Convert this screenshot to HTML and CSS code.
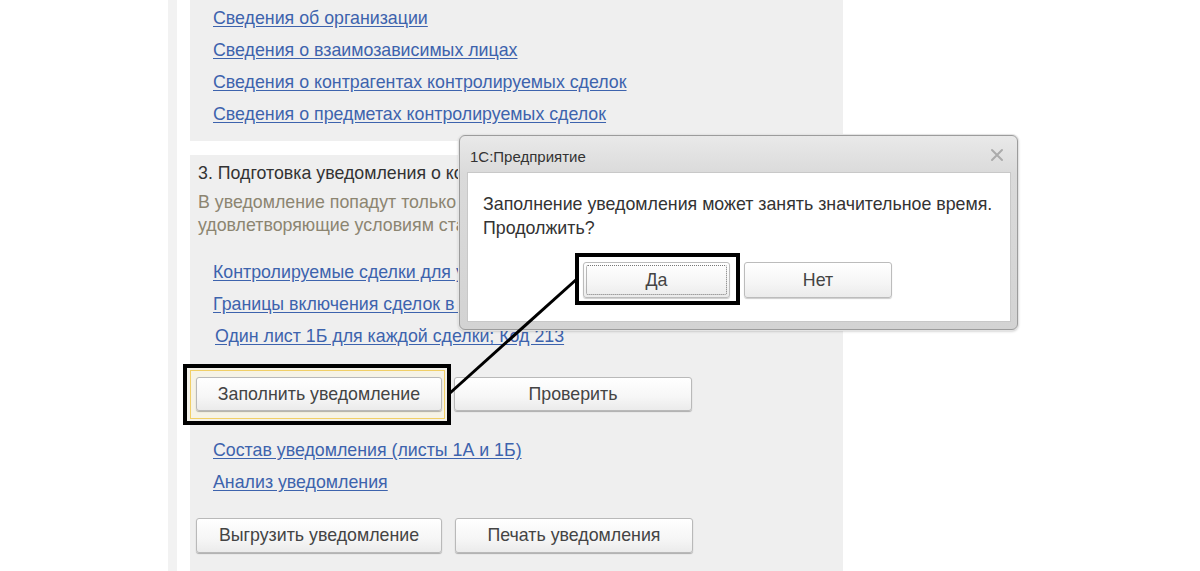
FILE: index.html
```html
<!DOCTYPE html>
<html lang="ru">
<head>
<meta charset="utf-8">
<title>Уведомление о контролируемых сделках</title>
<link rel="stylesheet" href="styles.css">
</head>
<body>
<div class="page">
  <div class="rail"></div>
  <div class="column">
    <section class="panel panel-top">
      <a class="link" href="#">Сведения об организации</a>
      <a class="link" href="#">Сведения о взаимозависимых лицах</a>
      <a class="link" href="#">Сведения о контрагентах контролируемых сделок</a>
      <a class="link" href="#">Сведения о предметах контролируемых сделок</a>
    </section>
    <section class="panel panel-main">
      <div class="heading">3. Подготовка уведомления о контролируемых сделках</div>
      <div class="note">В уведомление попадут только контролируемые сделки,<br>удовлетворяющие условиям статьи 105.14 НК РФ</div>
      <div class="links">
        <a class="link" href="#">Контролируемые сделки для уведомления</a>
        <a class="link" href="#">Границы включения сделок в уведомление</a>
        <a class="link link-shift" href="#">Один лист 1Б для каждой сделки; Код 213</a>
      </div>
      <div class="btn-row">
        <div class="mark mark-fill">
          <div class="mark-glow">
            <button class="btn btn-wide">Заполнить уведомление</button>
          </div>
        </div>
        <button class="btn">Проверить</button>
      </div>
      <div class="links links-after">
        <a class="link" href="#">Состав уведомления (листы 1А и 1Б)</a>
        <a class="link" href="#">Анализ уведомления</a>
      </div>
      <div class="btn-row btn-row-last">
        <button class="btn btn-wide">Выгрузить уведомление</button>
        <button class="btn">Печать уведомления</button>
      </div>
    </section>
  </div>
</div>

<div class="dialog">
  <div class="dialog-title">
    <span class="dialog-caption">1С:Предприятие</span>
    <svg class="dialog-close" width="14" height="14" viewBox="0 0 14 14">
      <path d="M2 2 L12 12 M12 2 L2 12" stroke="#ababab" stroke-width="2" stroke-linecap="round"/>
    </svg>
  </div>
  <div class="dialog-body">
    <p class="dialog-text">Заполнение уведомления может занять значительное время.<br>Продолжить?</p>
    <div class="dialog-buttons">
      <div class="mark mark-yes">
        <button class="dbtn"><span class="focus">Да</span></button>
      </div>
      <button class="dbtn"><span class="nofocus">Нет</span></button>
    </div>
  </div>
</div>

<svg class="pointer" width="1200" height="571" viewBox="0 0 1200 571">
  <line x1="450" y1="393" x2="578" y2="278" stroke="#000" stroke-width="3"/>
</svg>
</body>
</html>
```

FILE: styles.css
```css
* { box-sizing: border-box; }

html, body {
  margin: 0;
  padding: 0;
  background: #ffffff;
  width: 1200px;
  height: 571px;
  overflow: hidden;
  font-family: "Liberation Sans", Arial, sans-serif;
}

.page {
  display: flex;
  padding-left: 168px;
  height: 571px;
}

.rail {
  width: 9px;
  background: #f2f2f2;
  flex: none;
}

.column {
  margin-left: 13px;
  width: 653px;
  display: flex;
  flex-direction: column;
  gap: 14px;
}

.panel {
  background: #efefef;
}

.panel-top {
  display: flex;
  flex-direction: column;
  padding: 2px 0 11px 23px;
}

.link {
  display: block;
  font-size: 17.8px;
  line-height: 32px;
  color: #3d63ad;
  text-decoration: underline;
  text-underline-offset: 2px;
  white-space: nowrap;
  width: max-content;
}

.link-shift { margin-left: 2px; line-height: 33px; }

.panel-main {
  flex: 1;
  padding: 7px 0 0 8px;
}

.heading {
  font-size: 17.8px;
  line-height: 23px;
  color: #333333;
  white-space: nowrap;
}

.note {
  font-size: 17.8px;
  line-height: 23px;
  color: #8c8571;
  white-space: nowrap;
  margin-top: 6px;
}

.links {
  padding-left: 15px;
  margin-top: 19px;
}

.btn-row {
  display: flex;
  align-items: flex-start;
  gap: 13px;
  margin-top: 24px;
  margin-left: -2px;
}

.links-after { margin-top: 23px; }

.btn-row-last { margin-top: 20px; }

.btn {
  width: 238px;
  height: 34px;
  font-family: "Liberation Sans", Arial, sans-serif;
  font-size: 17.8px;
  color: #444444;
  background: linear-gradient(#ffffff, #f6f6f6 60%, #ebebeb);
  border: 1px solid #b9b9b9;
  border-radius: 3px;
  box-shadow: 0 1px 1px rgba(0,0,0,0.28);
  padding: 0;
  display: block;
}

.btn-row-last .btn { height: 35px; }

.btn-wide { width: 246px; }

/* black annotation frames */
.mark {
  border: 4px solid #000000;
  flex: none;
}

.mark-fill {
  margin: -13px -10px -14px -13px;
  background: #f3f1ea;
}

.mark-glow {
  margin: 2px 2px 2px 3px;
  border: 1px solid #f1cf66;
  background: #f6f3e6;
  padding: 6px 2px 7px 5px;
}

.mark-yes {
  margin: -9px -10px -7px -8px;
  padding: 5px 6px 3px 4px;
  background: #ffffff;
}

.pointer {
  position: absolute;
  left: 0;
  top: 0;
  pointer-events: none;
}

.dialog {
  position: absolute;
  left: 459px;
  top: 135px;
  width: 559px;
  height: 195px;
  background: linear-gradient(#e9e9e9, #dadada 20%, #d3d3d3);
  border: 1px solid #9c9c9c;
  border-radius: 6px;
  box-shadow: 0 0 0 1px #e4e4e4, 0 1px 3px rgba(0,0,0,0.3);
  display: flex;
  flex-direction: column;
  padding: 0 6px 7px 7px;
}

.dialog-title {
  height: 36px;
  flex: none;
  display: flex;
  align-items: center;
  justify-content: space-between;
  padding: 4px 7px 0 3px;
}

.dialog-caption {
  font-family: "Liberation Sans", Arial, sans-serif;
  font-size: 15px;
  letter-spacing: 0;
  color: #333333;
}

.dialog-close { display: block; margin-top: -3px; }

.dialog-body {
  flex: 1;
  background: #ffffff;
  border: 1px solid #c8c8c8;
  padding: 19px 0 0 15px;
}

.dialog-text {
  margin: 0;
  font-size: 17.8px;
  line-height: 24px;
  color: #333333;
  white-space: nowrap;
}

.dialog-buttons {
  display: flex;
  justify-content: center;
  align-items: flex-start;
  gap: 14px;
  margin-top: 22px;
  padding-right: 18px;
}

.dbtn {
  width: 148px;
  height: 36px;
  font-family: "Liberation Sans", Arial, sans-serif;
  font-size: 17.8px;
  color: #444444;
  background: linear-gradient(#ffffff, #f5f5f5 60%, #ebebeb);
  border: 1px solid #bcbcbc;
  border-radius: 3px;
  box-shadow: 0 1px 1px rgba(0,0,0,0.2);
  padding: 2px;
  display: flex;
}

.mark-yes .dbtn { width: 147px; }

.focus, .nofocus {
  flex: 1;
  display: flex;
  align-items: center;
  justify-content: center;
}

.focus {
  border: 1px dotted #777777;
  border-radius: 2px;
}
```
